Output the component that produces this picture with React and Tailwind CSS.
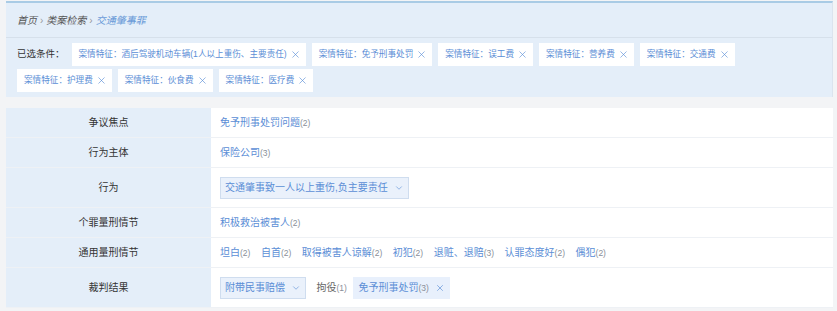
import { X, ChevronDown } from 'lucide-react';

const conditions = [
  '案情特征：酒后驾驶机动车辆(1人以上重伤、主要责任)',
  '案情特征：免予刑事处罚',
  '案情特征：误工费',
  '案情特征：营养费',
  '案情特征：交通费',
  '案情特征：护理费',
  '案情特征：伙食费',
  '案情特征：医疗费',
];

const font = { fontFamily: "'Liberation Sans','Noto Sans CJK SC',sans-serif" };

function Count({ n }) {
  return <span className="text-[8.5px] text-[#8a8f99]">({n})</span>;
}

function Item({ label, n }) {
  return (
    <span className="text-[#5b8ed6] whitespace-nowrap">
      {label}
      <Count n={n} />
    </span>
  );
}

function Row({ label, tall, children }) {
  return (
    <div className={`flex border-b border-[#eef1f5] ${tall ? 'h-[40px]' : 'h-[30px]'}`}>
      <div className="w-[205px] shrink-0 bg-[#e4eef9] flex items-center justify-center text-[10px] text-[#333]">
        {label}
      </div>
      <div className="flex-1 bg-white flex items-center gap-[10.5px] pl-[9px] text-[10px]">
        {children}
      </div>
    </div>
  );
}

export default function App() {
  return (
    <div className="w-[837px] h-[311px] overflow-hidden bg-[#f3f4f6] pl-[6px] pr-[4px] pt-[1px]" style={font}>
      {/* Filter panel */}
      <div className="bg-[#e4eef9] border-t-2 border-[#a9cbe5] border-r border-r-[#dbe4ee]">
        <div className="h-[35px] flex items-center pl-[11px] border-b border-[#d6e0eb] italic text-[10px]">
          <span className="text-[#555]">首页</span>
          <span className="text-[#999] mx-[3px] not-italic">›</span>
          <span className="text-[#555]">类案检索</span>
          <span className="text-[#999] mx-[3px] not-italic">›</span>
          <span className="text-[#6a9bd8]">交通肇事罪</span>
        </div>
        <div className="flex flex-wrap items-center gap-x-[6px] gap-y-[3px] pl-[11px] pt-[5px] pb-[5px] pr-[10px]">
          <span className="text-[9.5px] text-[#333] mr-[1px]">已选条件：</span>
          {conditions.map(c => (
            <span key={c} className="h-[23px] bg-white flex items-center gap-[3px] pl-[7px] pr-[5px] text-[8.6px] text-[#5b8ed6]">
              {c}
              <X size={11} strokeWidth={1.4} />
            </span>
          ))}
        </div>
      </div>

      {/* Table */}
      <div className="mt-[11px]">
        <Row label="争议焦点">
          <Item label="免予刑事处罚问题" n={2} />
        </Row>
        <Row label="行为主体">
          <Item label="保险公司" n={3} />
        </Row>
        <Row label="行为" tall>
          <span className="h-[22px] flex items-center gap-[6px] px-[4px] bg-[#eaf1fb] border border-[#cfddef] text-[#5b8ed6] whitespace-nowrap">
            交通肇事致一人以上重伤,负主要责任
            <ChevronDown size={10} strokeWidth={1.5} />
          </span>
        </Row>
        <Row label="个罪量刑情节">
          <Item label="积极救治被害人" n={2} />
        </Row>
        <Row label="通用量刑情节">
          <Item label="坦白" n={2} />
          <Item label="自首" n={2} />
          <Item label="取得被害人谅解" n={2} />
          <Item label="初犯" n={2} />
          <Item label="退赃、退赔" n={3} />
          <Item label="认罪态度好" n={2} />
          <Item label="偶犯" n={2} />
        </Row>
        <Row label="裁判结果" tall>
          <span className="h-[22px] flex items-center gap-[6px] px-[4px] bg-[#eaf1fb] border border-[#cfddef] text-[#5b8ed6] whitespace-nowrap">
            附带民事赔偿
            <ChevronDown size={10} strokeWidth={1.5} />
          </span>
          <span className="text-[#666] whitespace-nowrap">
            拘役<Count n={1} />
          </span>
          <span className="h-[22px] -ml-[4px] flex items-center gap-[6px] px-[5px] bg-[#e8f0fc] text-[#5b8ed6] whitespace-nowrap">
            <span>免予刑事处罚<Count n={3} /></span>
            <X size={10} strokeWidth={1.6} />
          </span>
        </Row>
      </div>
    </div>
  );
}
